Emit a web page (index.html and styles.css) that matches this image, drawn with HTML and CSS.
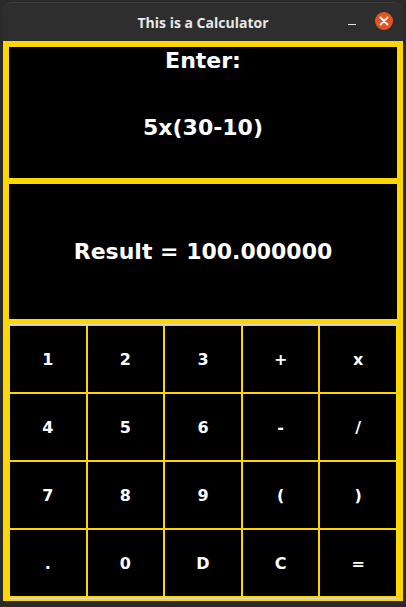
FILE: index.html
```html
<!DOCTYPE html>
<html>
<head>
<meta charset="utf-8">
<title>This is a Calculator</title>
<link rel="stylesheet" href="styles.css">
</head>
<body>
<div class="window">
  <header class="titlebar">
    <span class="title">This is a Calculator</span>
    <div class="controls">
      <span class="minimize"></span>
      <span class="close">
        <svg width="18" height="18" viewBox="0 0 18 18"><path d="M5.5 5.5 L12.5 12.5 M12.5 5.5 L5.5 12.5" stroke="#fff" stroke-width="1.8" stroke-linecap="round"/></svg>
      </span>
    </div>
  </header>
  <main class="frame">
    <section class="panel entry">
      <div class="label">Enter:</div>
      <div class="expr">5x(30-10)</div>
    </section>
    <section class="panel result">
      <div class="label">Result = 100.000000</div>
    </section>
    <div class="keypad">
      <div class="keys">
        <button class="key">1</button>
        <button class="key">2</button>
        <button class="key">3</button>
        <button class="key">+</button>
        <button class="key">x</button>
        <button class="key">4</button>
        <button class="key">5</button>
        <button class="key">6</button>
        <button class="key">-</button>
        <button class="key">/</button>
        <button class="key">7</button>
        <button class="key">8</button>
        <button class="key">9</button>
        <button class="key">(</button>
        <button class="key">)</button>
        <button class="key">.</button>
        <button class="key">0</button>
        <button class="key">D</button>
        <button class="key">C</button>
        <button class="key">=</button>
      </div>
    </div>
  </main>
</div>
</body>
</html>
```
FILE: styles.css
```css
html, body {
  margin: 0;
  padding: 0;
  background: #2a2a2a;
  width: 406px;
  height: 607px;
  overflow: hidden;
}

.window {
  margin: 2px 0 0 3px;
  width: 400px;
  display: flex;
  flex-direction: column;
}

.titlebar {
  height: 39px;
  background: #2e2e2e;
  border-radius: 9px 9px 0 0;
  box-shadow: inset 0 1px 0 #3c3c3c;
  display: flex;
  align-items: center;
  justify-content: center;
  position: relative;
}

.title {
  font-family: "Open Sans", "DejaVu Sans", sans-serif;
  font-weight: 700;
  font-size: 14px;
  color: #e8e8e8;
  margin-top: 1px;
}

.controls {
  position: absolute;
  right: 10px;
  top: 10px;
  display: flex;
  align-items: center;
  gap: 19px;
}

.minimize {
  display: block;
  width: 8px;
  height: 1px;
  background: #e0e0e0;
  margin-top: 7px;
}

.close {
  display: flex;
  width: 18px;
  height: 18px;
  border-radius: 50%;
  background: #e45420;
}

.frame {
  background: #ffd700;
  padding: 6px 6px 2px 6px;
  display: flex;
  flex-direction: column;
}

.panel {
  background: #000;
  color: #fff;
  font-family: "DejaVu Sans", sans-serif;
  font-weight: 700;
  font-size: 22px;
  display: flex;
  flex-direction: column;
  align-items: center;
}

.entry {
  height: 131px;
}

.entry .label {
  margin-top: 1px;
  line-height: 26px;
}

.entry .expr {
  margin-top: 41px;
  line-height: 26px;
}

.result {
  margin-top: 6px;
  height: 135px;
  justify-content: center;
}

.keypad {
  margin-top: 5px;
  border-top: 1px solid #d8d8d8;
  border-bottom: 1px solid #d8d8d8;
  padding-bottom: 1px;
}

.keys {
  display: grid;
  grid-template-columns: repeat(5, 1fr);
  grid-template-rows: repeat(4, 68px);
}

.key {
  margin: 0;
  padding: 0;
  background: #000;
  border: 1px solid #ffd700;
  color: #fff;
  font-family: "DejaVu Sans", sans-serif;
  font-weight: 700;
  font-size: 16px;
}
```
